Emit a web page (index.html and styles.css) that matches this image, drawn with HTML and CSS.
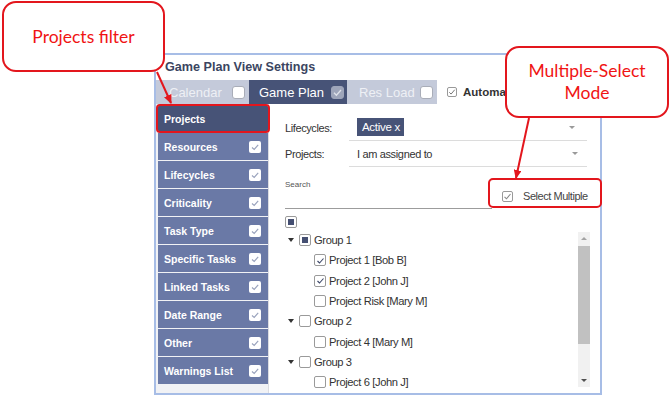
FILE: index.html
```html
<!DOCTYPE html>
<html>
<head>
<meta charset="utf-8">
<link rel="stylesheet" href="styles.css">
</head>
<body>
<div class="page">
  <div class="panel">
    <div class="panel-title">Game Plan View Settings</div>
    <div class="tabs">
      <div class="tab tab-light tab-cal"><span>Calendar</span><span class="tcb"></span></div>
      <div class="tab tab-dark tab-gp"><span>Game Plan</span><span class="tcb tcb-on"><svg viewBox="0 0 13 13" width="13" height="13"><path d="M3 6.8 L5.4 9.2 L10 4" fill="none" stroke="#dfe2ea" stroke-width="1.3"/></svg></span></div>
      <div class="tab tab-light tab-res"><span>Res Load</span><span class="tcb"></span></div>
      <div class="tab tab-auto"><span class="cb cb-auto"><svg viewBox="0 0 11 11" width="10" height="10"><path d="M2.5 5.8 L4.5 7.8 L8.5 3" fill="none" stroke="#777" stroke-width="1.1"/></svg></span><span class="auto-text">Automatic Sync</span></div>
    </div>
    <div class="body">
      <div class="sidebar">
        <div class="side-item active">Projects</div>
        <div class="side-item"><span>Resources</span><span class="scb"><svg viewBox="0 0 12 12" width="12" height="12"><path d="M3 6.5 L5.2 8.5 L9.2 3.8" fill="none" stroke="#9aa3bd" stroke-width="1.2"/></svg></span></div>
        <div class="side-item"><span>Lifecycles</span><span class="scb"><svg viewBox="0 0 12 12" width="12" height="12"><path d="M3 6.5 L5.2 8.5 L9.2 3.8" fill="none" stroke="#9aa3bd" stroke-width="1.2"/></svg></span></div>
        <div class="side-item"><span>Criticality</span><span class="scb"><svg viewBox="0 0 12 12" width="12" height="12"><path d="M3 6.5 L5.2 8.5 L9.2 3.8" fill="none" stroke="#9aa3bd" stroke-width="1.2"/></svg></span></div>
        <div class="side-item"><span>Task Type</span><span class="scb"><svg viewBox="0 0 12 12" width="12" height="12"><path d="M3 6.5 L5.2 8.5 L9.2 3.8" fill="none" stroke="#9aa3bd" stroke-width="1.2"/></svg></span></div>
        <div class="side-item"><span>Specific Tasks</span><span class="scb"><svg viewBox="0 0 12 12" width="12" height="12"><path d="M3 6.5 L5.2 8.5 L9.2 3.8" fill="none" stroke="#9aa3bd" stroke-width="1.2"/></svg></span></div>
        <div class="side-item"><span>Linked Tasks</span><span class="scb"><svg viewBox="0 0 12 12" width="12" height="12"><path d="M3 6.5 L5.2 8.5 L9.2 3.8" fill="none" stroke="#9aa3bd" stroke-width="1.2"/></svg></span></div>
        <div class="side-item"><span>Date Range</span><span class="scb"><svg viewBox="0 0 12 12" width="12" height="12"><path d="M3 6.5 L5.2 8.5 L9.2 3.8" fill="none" stroke="#9aa3bd" stroke-width="1.2"/></svg></span></div>
        <div class="side-item"><span>Other</span><span class="scb"><svg viewBox="0 0 12 12" width="12" height="12"><path d="M3 6.5 L5.2 8.5 L9.2 3.8" fill="none" stroke="#9aa3bd" stroke-width="1.2"/></svg></span></div>
        <div class="side-item"><span>Warnings List</span><span class="scb"><svg viewBox="0 0 12 12" width="12" height="12"><path d="M3 6.5 L5.2 8.5 L9.2 3.8" fill="none" stroke="#9aa3bd" stroke-width="1.2"/></svg></span></div>
      </div>
      <div class="content">
        <div class="field-row row1">
          <div class="flabel">Lifecycles:</div>
          <div class="field"><span class="chip">Active x</span><span class="caret"></span></div>
        </div>
        <div class="field-row row2">
          <div class="flabel">Projects:</div>
          <div class="field"><span class="ftext">I am assigned to</span><span class="caret caret2"></span></div>
        </div>
        <div class="search-row">
          <div class="search-box"><div class="search-label">Search</div></div>
          <div class="select-multi">
            <span class="cb"><svg viewBox="0 0 11 11" width="11" height="11"><path d="M2.5 5.8 L4.5 7.8 L8.5 3" fill="none" stroke="#888" stroke-width="1.1"/></svg></span>
            <span class="sm-text">Select Multiple</span>
            <div class="hl-box"></div>
          </div>
        </div>
        <div class="all-row"><span class="cb cb-ind"><span class="ind"></span></span></div>
        <div class="tree-wrap">
          <div class="tree">
            <div class="trow grp"><span class="tcaret"></span><span class="cb cb-ind"><span class="ind"></span></span><span class="tlabel">Group 1</span></div>
            <div class="trow leaf"><span class="cb"><svg viewBox="0 0 11 11" width="11" height="11"><path d="M2.5 6 L4.5 8 L8.5 3.5" fill="none" stroke="#3e4868" stroke-width="1.1"/></svg></span><span class="tlabel">Project 1 [Bob B]</span></div>
            <div class="trow leaf"><span class="cb"><svg viewBox="0 0 11 11" width="11" height="11"><path d="M2.5 6 L4.5 8 L8.5 3.5" fill="none" stroke="#3e4868" stroke-width="1.1"/></svg></span><span class="tlabel">Project 2 [John J]</span></div>
            <div class="trow leaf"><span class="cb"></span><span class="tlabel">Project Risk [Mary M]</span></div>
            <div class="trow grp"><span class="tcaret"></span><span class="cb"></span><span class="tlabel">Group 2</span></div>
            <div class="trow leaf"><span class="cb"></span><span class="tlabel">Project 4 [Mary M]</span></div>
            <div class="trow grp"><span class="tcaret"></span><span class="cb"></span><span class="tlabel">Group 3</span></div>
            <div class="trow leaf"><span class="cb"></span><span class="tlabel">Project 6 [John J]</span></div>
          </div>
          <div class="scrollbar">
            <span class="sb-up"></span>
            <span class="sb-thumb"></span>
            <span class="sb-down"></span>
          </div>
        </div>
      </div>
    </div>
  </div>

  <svg class="arrows" width="670" height="397" viewBox="0 0 670 397">
    <defs>
      <marker id="ah" markerWidth="9" markerHeight="8" refX="8" refY="4" orient="auto" markerUnits="userSpaceOnUse">
        <path d="M0,0 L9,4 L0,8 z" fill="#e3161d"/>
      </marker>
    </defs>
    <line x1="157" y1="72" x2="171" y2="103" stroke="#e3161d" stroke-width="2" marker-end="url(#ah)"/>
    <line x1="529" y1="118" x2="516" y2="178" stroke="#e3161d" stroke-width="2" marker-end="url(#ah)"/>
  </svg>

  <div class="callout callout-projects">Projects filter</div>
  <div class="callout callout-multi">Multiple-Select<br>Mode</div>
</div>
</body>
</html>
```

FILE: styles.css
```css
* { box-sizing: border-box; }
html, body { margin: 0; padding: 0; background: #fff; }
body { width: 670px; height: 397px; overflow: hidden; font-family: "Liberation Sans", Arial, sans-serif; }

.page { position: relative; width: 670px; height: 397px; padding: 53px 0 0 154px; }

.panel {
  width: 448px;
  height: 342px;
  border: 2px solid #a7bde6;
  background: #fff;
  display: flex;
  flex-direction: column;
}

.panel-title {
  height: 25px;
  line-height: 24px;
  padding-left: 9px;
  font-size: 12.6px;
  font-weight: bold;
  color: #3b4561;
  white-space: nowrap;
}

.tabs { height: 24px; display: flex; }
.tab {
  height: 24px;
  display: flex;
  align-items: center;
  font-size: 13px;
  white-space: nowrap;
}
.tab-light { background: #c4cada; color: #eef0f5; }
.tab-dark { background: #475377; color: #fff; }
.tab-cal { width: 93px; padding-left: 13px; }
.tab-cal .tcb { margin-left: 10px; }
.tab-gp { width: 98px; padding-left: 10px; }
.tab-gp .tcb { margin-left: 7px; }
.tab-res { width: 90px; padding-left: 12px; }
.tab-res .tcb { margin-left: 5px; }
.tab-auto { flex: 1; padding-left: 10px; background: #fff; overflow: hidden; }
.auto-text { margin-left: 6px; font-size: 11.5px; font-weight: bold; color: #333; }

.tcb {
  width: 13px; height: 13px;
  background: #fff;
  border: 1px solid #a9adb8;
  border-radius: 3px;
  display: inline-flex;
}
.tcb-on { background: #9ea5ba; border-color: #9ea5ba; }
.tcb svg { margin: -1px; }

.cb {
  width: 11px; height: 11px;
  border: 1px solid #9a9a9a;
  border-radius: 2px;
  background: #fff;
  display: inline-flex;
  align-items: center;
  justify-content: center;
  flex: none;
}
.cb svg { margin: -1px; flex: none; }
.cb-auto { width: 10px; height: 10px; border-color: #999; }
.cb-ind .ind { width: 6px; height: 6px; background: #454f72; }

.body { flex: 1; display: flex; min-height: 0; }

.sidebar {
  width: 113px;
  background: #f1f2f5;
  border-right: 1px solid #dcdde2;
  padding: 1px 0 0 2px;
}
.side-item {
  width: 110px;
  height: 27px;
  margin-bottom: 1px;
  background: #6a79a6;
  color: #fff;
  font-size: 10.5px;
  font-weight: bold;
  display: flex;
  align-items: center;
  justify-content: space-between;
  padding: 0 7px 0 6px;
  white-space: nowrap;
}
.side-item.active {
  background: #475377;
  position: relative;
  border-radius: 2px;
}
.side-item.active::after {
  content: "";
  position: absolute;
  left: -2px; top: -1px; right: -2px; bottom: -1px;
  border: 2px solid #e3161d;
  border-radius: 4px;
}
.scb {
  width: 12px; height: 12px;
  background: #fff;
  border-radius: 2px;
  display: inline-flex;
}

.content {
  flex: 1;
  min-width: 0;
  display: flex;
  flex-direction: column;
  padding: 10px 13px 0 16px;
}

.field-row { display: flex; align-items: center; }
.flabel {
  width: 64px;
  font-size: 11px;
  letter-spacing: -0.4px;
  color: #333;
}
.field {
  flex: 1;
  display: flex;
  align-items: center;
  border-bottom: 1px solid #dcdcdc;
  padding-left: 8px;
  position: relative;
}
.row1 .field { height: 27px; }
.row2 .field { height: 26px; }
.chip {
  background: #475377;
  color: #fff;
  font-size: 11.5px;
  letter-spacing: -0.3px;
  height: 18px;
  line-height: 18px;
  padding: 0 4px 0 5px;
}
.ftext { font-size: 11px; letter-spacing: -0.35px; color: #333; }
.caret {
  margin-left: auto;
  margin-right: 12px;
  width: 0; height: 0;
  border-left: 3.5px solid transparent;
  border-right: 3.5px solid transparent;
  border-top: 3px solid #9a9a9a;
}
.caret2 { margin-right: 9px; }

.search-row { display: flex; align-items: flex-start; height: 42px; }
.search-box {
  width: 207px;
  height: 42px;
  border-bottom: 1px solid #9c9c9c;
  padding-top: 13px;
  flex: none;
}
.search-label { font-size: 8px; line-height: 10px; color: #555; }
.select-multi {
  position: relative;
  margin-left: 10px;
  padding-top: 23px;
  display: flex;
  align-items: center;
  white-space: nowrap;
  flex: none;
}
.sm-text { margin-left: 10px; font-size: 11px; line-height: 12px; letter-spacing: -0.45px; color: #444; }
.hl-box {
  position: absolute;
  left: -14px; top: 11px;
  width: 114px; height: 30px;
  border: 2px solid #e3161d;
  border-radius: 5px;
}

.all-row { margin-top: 7px; height: 12px; display: flex; }
.all-row .cb { width: 12px; height: 12px; }

.tree-wrap {
  flex: 1;
  min-height: 0;
  display: flex;
  overflow: hidden;
  margin-top: 2px;
  margin-right: -3px;
}
.tree { flex: 1; }
.trow {
  height: 20.3px;
  display: flex;
  align-items: center;
  white-space: nowrap;
}
.trow.grp { padding-left: 3px; }
.trow.leaf { padding-left: 29px; }
.tcaret {
  width: 0; height: 0;
  border-left: 3.5px solid transparent;
  border-right: 3.5px solid transparent;
  border-top: 4px solid #333;
  margin-right: 5px;
}
.trow .cb { width: 12px; height: 12px; }
.tlabel {
  margin-left: 3px;
  font-size: 11.2px;
  letter-spacing: -0.4px;
  color: #333;
}

.scrollbar {
  width: 12px;
  height: 155px;
  margin-top: 2px;
  background: #f1f1f1;
  display: flex;
  flex-direction: column;
  align-items: center;
  flex: none;
}
.sb-up {
  margin-top: 5px;
  width: 0; height: 0;
  border-left: 3px solid transparent;
  border-right: 3px solid transparent;
  border-bottom: 3px solid #a3a3a3;
}
.sb-thumb {
  margin-top: 6px;
  width: 12px;
  height: 98px;
  background: #c1c1c1;
}
.sb-down {
  margin-top: 35px;
  width: 0; height: 0;
  border-left: 3px solid transparent;
  border-right: 3px solid transparent;
  border-top: 3px solid #505050;
}

.arrows { position: absolute; left: 0; top: 0; pointer-events: none; }

.callout {
  position: absolute;
  background: #fff;
  border: 2px solid #e3161d;
  border-radius: 14px;
  color: #f01414;
  font-family: Lato, "Liberation Sans", sans-serif;
  font-size: 17.5px;
  line-height: 22px;
  display: flex;
  align-items: center;
  justify-content: center;
  text-align: center;
}
.callout-projects { left: 2px; top: 1px; width: 163px; height: 71px; }
.callout-multi { left: 505px; top: 46px; width: 164px; height: 72px; }
```
